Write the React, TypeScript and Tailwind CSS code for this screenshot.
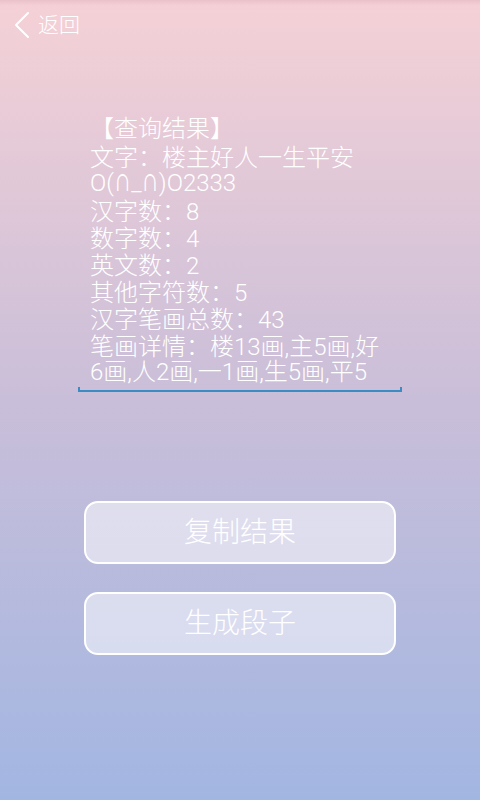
import React from "react";

const lines = [
  "【查询结果】",
  "文字：楼主好人一生平安",
  "O(∩_∩)O2333",
  "汉字数：8",
  "数字数：4",
  "英文数：2",
  "其他字符数：5",
  "汉字笔画总数：43",
  "笔画详情：楼13画,主5画,好",
  "6画,人2画,一1画,生5画,平5",
];

function renderLine(l: string) {
  const parts: React.ReactNode[] = [];
  let buf = "";
  let k = 0;
  for (const ch of l) {
    if (ch === "：") {
      if (buf) parts.push(<span key={k++}>{buf}</span>);
      buf = "";
      parts.push(
        <span key={k++} style={{ fontFamily: '"Noto Sans CJK TC", sans-serif' }}>
          ：
        </span>
      );
    } else if (ch === "∩") {
      if (buf) parts.push(<span key={k++}>{buf}</span>);
      buf = "";
      parts.push(
        <span
          key={k++}
          className="inline-block scale-y-[1.4] origin-[50%_78%] leading-[27px]"
          style={{ fontFamily: '"DejaVu Sans", sans-serif' }}
        >
          ∩
        </span>
      );
    } else {
      buf += ch;
    }
  }
  if (buf) parts.push(<span key={k++}>{buf}</span>);
  return parts;
}

export default function App() {
  const font = { fontFamily: 'Roboto, "Noto Sans CJK SC", "Noto Sans", sans-serif' };
  return (
    <div
      lang="zh-CN"
      className="relative w-full h-[800px] overflow-hidden bg-gradient-to-b from-[#f5d1d6] via-[#c9bed9] to-[#a2b6e2] text-white font-light"
      style={font}
    >
      <div className="absolute left-0 top-0 w-full h-[6px] bg-gradient-to-b from-[rgba(150,90,100,0.12)] to-transparent" />
      <div className="h-[50px] flex items-center pl-[13px]">
        <svg width="18" height="28" viewBox="0 0 18 28" className="shrink-0">
          <path d="M15 2 L3 14 L15 26" fill="none" stroke="white" strokeWidth="2" strokeLinecap="round" strokeLinejoin="round" />
        </svg>
        <span className="ml-[7px] text-[21px] leading-[26px]">返回</span>
      </div>

      <div className="mx-[78px] mt-[66px]">
        <div className="pl-[12px] text-[24px] leading-[27px] whitespace-nowrap">
          {lines.map((l, i) => (
            <div key={i} className="h-[27px] flex items-center">
              <div>{renderLine(l)}</div>
            </div>
          ))}
        </div>
        <div className="mt-[1px] h-[5px] border-l-[2px] border-r-[2px] border-b-[2px] border-[#3a8cc2]" />
      </div>

      <div className="mx-[84px] mt-[109px] flex flex-col gap-[28px]">
        <div className="h-[63px] rounded-[14px] border-2 border-white bg-[rgba(255,255,255,0.5)] flex items-center justify-center text-[28px]">
          复制结果
        </div>
        <div className="h-[63px] rounded-[14px] border-2 border-white bg-[rgba(255,255,255,0.5)] flex items-center justify-center text-[28px]">
          生成段子
        </div>
      </div>
    </div>
  );
}
